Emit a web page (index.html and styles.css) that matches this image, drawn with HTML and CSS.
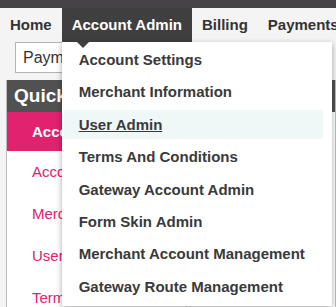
FILE: index.html
```html
<!DOCTYPE html>
<html lang="en">
<head>
  <meta charset="UTF-8">
  <meta name="viewport" content="width=device-width, initial-scale=1.0">
  <title>Account Admin</title>
  <link rel="stylesheet" href="styles.css">
</head>
<body>
  <div class="topbar"></div>

  <nav class="menu">
    <div class="menu-item">Home</div>
    <div class="menu-item active">
      Account Admin
      <div class="dropdown">
        <a class="dropdown-item">Account Settings</a>
        <a class="dropdown-item">Merchant Information</a>
        <a class="dropdown-item hover">User Admin</a>
        <a class="dropdown-item">Terms And Conditions</a>
        <a class="dropdown-item">Gateway Account Admin</a>
        <a class="dropdown-item">Form Skin Admin</a>
        <a class="dropdown-item">Merchant Account Management</a>
        <a class="dropdown-item">Gateway Route Management</a>
      </div>
    </div>
    <div class="menu-item">Billing</div>
    <div class="menu-item">Payments</div>
  </nav>

  <div class="toolbar">
    <input type="text" class="search" value="Payments" />
  </div>

  <div class="main-content">
    <div class="panel quick-links">
      <div class="panel-header">Quick Links</div>
      <div class="link-row current">Account Settings</div>
      <div class="link-row">Account Settings</div>
      <div class="link-row">Merchant Information</div>
      <div class="link-row">User Admin</div>
      <div class="link-row">Terms And Conditions</div>
    </div>

    <div class="panel side">
      <div class="panel-header">Summary</div>
    </div>
  </div>
</body>
</html>
```

FILE: styles.css
```css
body {
  font-family: "Liberation Sans", Arial, sans-serif;
  margin: 0;
  background-color: #f4f4f4;
  color: #333;
  overflow: hidden;
}

.topbar {
  height: 8px;
  background-color: #454347;
}

.menu {
  display: flex;
  height: 34px;
  background-color: #f4f4f4;
}

.menu-item {
  position: relative;
  padding: 0 10px;
  line-height: 34px;
  font-size: 15px;
  font-weight: bold;
  color: #333;
  white-space: nowrap;
}

.menu-item.active {
  background-color: #3f3f3f;
  color: #fff;
}

.dropdown {
  position: absolute;
  top: 34px;
  left: 0;
  z-index: 10;
  width: 270px;
  padding: 3px 0 5px;
  display: flex;
  flex-direction: column;
  gap: 3.4px;
  background-color: #fff;
  box-shadow: 0 2px 6px rgba(0, 0, 0, 0.35);
}

.dropdown::before {
  content: "";
  position: absolute;
  top: 0;
  left: 15px;
  border-top: 6px solid #3f3f3f;
  border-left: 6px solid transparent;
  border-right: 6px solid transparent;
}

.dropdown-item {
  display: block;
  margin: 0 9px 0 2px;
  padding-left: 15px;
  line-height: 29px;
  font-size: 15px;
  font-weight: bold;
  color: #3a3a3a;
}

.dropdown-item.hover {
  background-color: #eff8f7;
  text-decoration: underline;
}

.toolbar {
  padding: 0 0 0 15px;
  height: 38px;
}

.search {
  box-sizing: border-box;
  width: 200px;
  height: 31px;
  margin: 0;
  padding: 0 7px;
  border: 1px solid #b3b3b3;
  font-family: "Liberation Sans", Arial, sans-serif;
  font-size: 16px;
  color: #333;
}

.main-content {
  display: flex;
  gap: 3px;
  padding-left: 6px;
}

.panel {
  background-color: #fff;
  border: 1px solid #bbb;
  border-top: none;
  height: 300px;
}

.quick-links {
  width: 250px;
}

.side {
  width: 200px;
}

.panel-header {
  height: 32px;
  line-height: 32px;
  padding-left: 7px;
  background-color: #515151;
  color: #fff;
  font-size: 19px;
  font-weight: bold;
  white-space: nowrap;
}

.link-row {
  padding-left: 25px;
  line-height: 42px;
  font-size: 15px;
  color: #e0226f;
  white-space: nowrap;
}

.link-row.current {
  line-height: 39px;
  background-color: #e0226f;
  color: #fff;
  font-weight: bold;
}
```
